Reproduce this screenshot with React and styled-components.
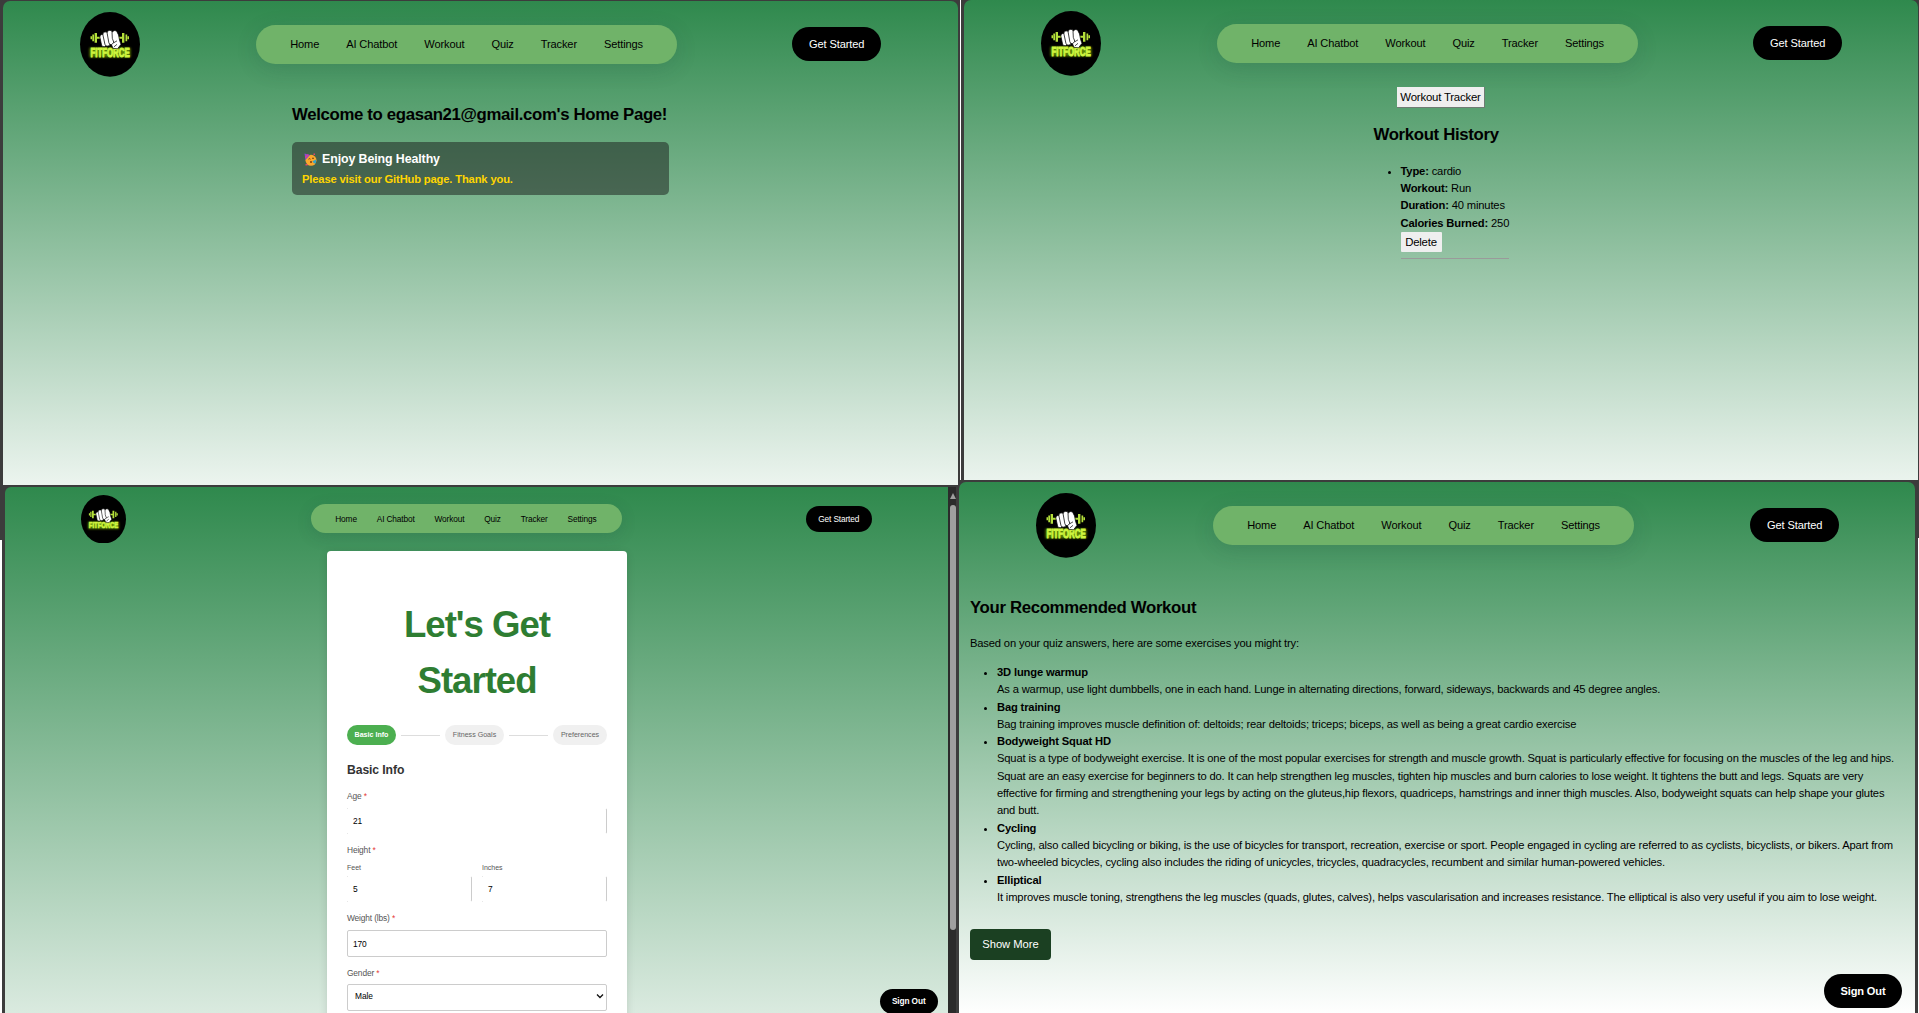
import React from "react";
import styled, { createGlobalStyle, css } from "styled-components";

const z = (n) => ({ $zoom = 2 / 3 }) => `${+(n * $zoom).toFixed(2)}px`;

const GlobalStyle = createGlobalStyle`
  *, *::before, *::after { box-sizing: border-box; }
  body {
    margin: 0;
    background: #3c3c3c;
    color: #000;
    font-family: "Liberation Sans", Arial, sans-serif;
    overflow: hidden;
  }
`;

const Desktop = styled.div`
  display: grid;
  grid-template-columns: 956px 5px 958px;
  grid-template-rows: 480px 5px 528px;
  width: 1919px;
  height: 1013px;
`;

const Frame = styled.section`
  display: flex;
  background: #3c3c3c;
  min-width: 0;
  min-height: 0;
  overflow: hidden;
`;
const HomeFrame = styled(Frame)`
  grid-area: 1 / 1 / 3 / 3;
  padding: 1px 2px 0 3px;
  border-right: 1px solid #fff;
`;
const TrackerFrame = styled(Frame)`
  grid-area: 1 / 3 / 2 / 4;
  padding: 0 1px 0 3px;
`;
const QuizFrame = styled(Frame)`
  grid-area: 3 / 1 / 4 / 2;
  padding: 2px 0 0 5px;
  background: linear-gradient(#fff, #fff) 0 55px / 2px 100% no-repeat #3c3c3c;
`;
const WorkoutFrame = styled(Frame)`
  grid-area: 2 / 2 / 4 / 4;
  padding: 2px 4px 0 3px;
  background: linear-gradient(#fff, #fff) 100% 58px / 1px 100% no-repeat #3c3c3c;
`;

const Page = styled.main`
  position: relative;
  flex: 1;
  min-width: 0;
  overflow: hidden;
  display: flex;
  flex-direction: column;
  border-radius: ${({ $radius = "7px 7px 0 0" }) => $radius};
  background: linear-gradient(#2f894d 0, #fff ${({ $fade = 533 }) => $fade}px);
`;

const Header = styled.header`
  flex: none;
  display: flex;
  align-items: center;
  justify-content: space-between;
  padding: ${z(16)} ${({ $end = 77 }) => $end}px 0 ${({ $start = 77 }) => $start}px;
  height: ${({ $zoom }) => ($zoom === 0.5 ? 55.5 : 76)}px;
`;
const LogoBox = styled.div`
  flex: none;
  width: ${z(90)};
  height: ${z(97)};
  svg { display: block; width: 100%; height: 100%; }
`;
const Nav = styled.nav`
  display: flex;
  align-items: center;
  justify-content: space-between;
  width: ${({ $zoom }) => ($zoom === 0.5 ? 311 : 421)}px;
  height: ${z(58.5)};
  padding: 0 ${z(50.5)} 0 ${({ $zoom }) => ($zoom === 0.5 ? 24.5 : 34.5)}px;
  margin-left: ${({ $zoom }) => ($zoom === 0.5 ? 1 : 0)}px;
  border-radius: ${z(30)};
  background: #70b369;
  box-shadow: 0 ${z(8)} ${z(32)} rgba(31, 60, 60, 0.16);
`;
const NavLink = styled.a`
  font-size: ${z(16.6)};
  letter-spacing: -0.12px;
  white-space: nowrap;
`;
const Pill = styled.button`
  width: ${z(133)};
  height: ${z(51)};
  padding: 0;
  border: 0;
  border-radius: ${z(30)};
  background: #000;
  color: #fff;
  font: ${({ $bold }) => ($bold ? 700 : 400)} ${z(16.6)} "Liberation Sans", Arial, sans-serif;
  letter-spacing: -0.12px;
`;
const SignOut = styled(Pill)`
  position: absolute;
  right: ${({ $right }) => $right}px;
  bottom: ${({ $bottom }) => $bottom}px;
  width: ${z(117)};
`;

const Title = styled.h2`
  margin: 0;
  font-size: 16.8px;
  letter-spacing: -0.34px;
  line-height: 26px;
  white-space: nowrap;
`;

const HomeBody = styled.div`
  display: flex;
  flex-direction: column;
  align-self: center;
  width: 377px;
  margin-top: 25px;
`;
const Notice = styled.div`
  margin-top: 14px;
  height: 53px;
  padding: 7px 10px;
  border-radius: 5px;
  background: rgba(26, 30, 28, 0.52);
  font-weight: 700;
  line-height: 20px;
  white-space: nowrap;
`;
const NoticeHead = styled.div`
  display: flex;
  align-items: center;
  gap: 5px;
  padding-left: 2px;
  color: #fff;
  font-size: 12.4px;
  letter-spacing: -0.1px;
  svg { width: 13px; height: 13px; }
`;
const NoticeText = styled.div`
  color: #ffd500;
  font-size: 11.2px;
  letter-spacing: -0.155px;
`;

const TrackerBody = styled.div`
  display: flex;
  flex-direction: column;
  align-items: center;
  margin-top: 11px;
`;
const PlainButton = styled.button`
  height: 20px;
  width: ${({ $w }) => $w}px;
  padding: 0;
  border: 0;
  border-radius: 1px;
  background: #efefef;
  color: #000;
  font: 11.4px "Liberation Sans", Arial, sans-serif;
  letter-spacing: -0.2px;
  white-space: nowrap;
  ${({ $shadow }) => $shadow && css`
    height: 21px;
    border-style: solid;
    border-width: 0 1px 1px 0;
    border-color: #6f7b73;
    border-radius: 0;
  `}
`;
const History = styled.div`
  width: 135px;
  margin-top: 14px;
`;
const HistoryList = styled.ul`
  margin: 15px 0 0;
  padding-left: 27px;
  font-size: 11.2px;
  letter-spacing: -0.16px;
  line-height: 17.2px;
  white-space: nowrap;
`;
const Rule = styled.hr`
  margin: 6px 0 0;
  border: 0;
  height: 1px;
  background: #9a9a9a;
`;

const WorkoutBody = styled.div`
  padding: 37px 11px 0;
  font-size: 11.2px;
  letter-spacing: -0.16px;
  line-height: 17.32px;
`;
const Intro = styled.p`
  margin: 14px 0 11.6px;
`;
const Exercises = styled.ul`
  margin: 0;
  padding-left: 27px;
  white-space: nowrap;
`;
const ShowMore = styled.button`
  display: block;
  margin-top: 22.4px;
  width: 81px;
  height: 31px;
  padding: 0;
  border: 0;
  border-radius: 4px;
  background: #1b4022;
  color: #fff;
  font: 11.2px "Liberation Sans", Arial, sans-serif;
`;

const Card = styled.form`
  align-self: center;
  flex: none;
  width: 300px;
  height: 500px;
  margin: 8.5px 0 0 1px;
  padding: 46px 20px 0;
  border-radius: 4px;
  background: #fff;
  box-shadow: 0 2px 8px rgba(0, 0, 0, 0.12);
`;
const CardTitle = styled.h1`
  margin: 0 auto;
  width: 200px;
  color: #2e7d32;
  font-size: 36.6px;
  letter-spacing: -1px;
  line-height: 56px;
  text-align: center;
`;
const Steps = styled.div`
  display: flex;
  align-items: center;
  gap: 5px;
  margin-top: 16px;
`;
const Step = styled.span`
  width: ${({ $w }) => $w}px;
  height: 20px;
  border-radius: 10px;
  background: ${({ $active }) => ($active ? "#4caf50" : "#f0f0f0")};
  color: ${({ $active }) => ($active ? "#fff" : "#666")};
  font-size: 7.1px;
  font-weight: ${({ $active }) => ($active ? 700 : 400)};
  line-height: 20px;
  text-align: center;
`;
const StepLine = styled.span`
  flex: 1;
  height: 1px;
  background: #ddd;
`;
const FormTitle = styled.h3`
  margin: 15px 0 0;
  color: #333;
  font-size: 12.2px;
  letter-spacing: -0.1px;
  line-height: 20px;
`;
const Label = styled.label`
  display: block;
  margin-top: ${({ $top = 10 }) => $top}px;
  color: #555;
  font-size: ${({ $small }) => ($small ? 7 : 8.4)}px;
  letter-spacing: ${({ $small }) => ($small ? 0 : -0.15)}px;
  line-height: 13px;
  i { color: #e53935; font-style: normal; }
`;
const Field = styled.div`
  display: flex;
  align-items: center;
  justify-content: space-between;
  height: 26px;
  margin-top: ${({ $top = 5 }) => $top}px;
  padding: 0 5px;
  border: 1px solid transparent;
  border-right-color: #ccc;
  border-radius: 2px;
  background:
    linear-gradient(#bbb, #bbb) 0 0 / 1px 1px no-repeat border-box,
    linear-gradient(#bbb, #bbb) 0 100% / 1px 1px no-repeat border-box;
  font-size: 8.4px;
  letter-spacing: -0.1px;
  ${({ $boxed }) => $boxed && css`
    height: 27px;
    border-color: #ccc;
    background: none;
  `}
  ${({ $select }) => $select && css`
    padding: 0 2px 3px 7px;
  `}
`;
const FieldPair = styled.div`
  display: grid;
  grid-template-columns: 1fr 1fr;
  gap: 10px;
`;

const ScrollBar = styled.div`
  width: 8px;
  display: flex;
  flex-direction: column;
  align-items: center;
  background: #2b2b2b;
  padding: 6px 0 0 2px;
  svg { display: block; flex: none; }
`;
const Thumb = styled.div`
  width: 6px;
  height: 425px;
  margin-top: 6px;
  border-radius: 3px;
  background: #9f9f9f;
`;

const Logo = () => (
  <svg viewBox="0 0 60 65" preserveAspectRatio="none">
    <defs>
      <filter id="glow" x="-20%" y="-50%" width="140%" height="200%">
        <feGaussianBlur stdDeviation="1.3" />
      </filter>
    </defs>
    <ellipse cx="30" cy="32.5" rx="30" ry="32.5" fill="#000" />
    <g fill="#b4e03a">
      <path d="M10.500 24.500h1.500v3h-1.500zM12.300 22.500h1.700v7h-1.700zM14.600 21h2.400v10h-2.400zM17 25h4v2h-4z" />
      <path d="M47.500 24.500h1.500v3h-1.500zM45.500 22.500h1.700v7h-1.700zM42 21h2.400v10H42zM38 25h4v2h-4z" />
    </g>
    <rect x="9.500" y="36" width="41" height="9.500" fill="#8fc80c" filter="url(#glow)" opacity="0.65" />
    <g transform="translate(10.400 44.800) scale(0.63 1)">
      <text fill="#cdf53f" stroke="#cdf53f" strokeWidth="1"
        fontFamily="Liberation Sans, Arial, sans-serif" fontWeight="700" fontSize="12.500">FITFORCE</text>
    </g>
    <g fill="#fff" stroke="#000" strokeWidth="0.7">
      <rect x="20.500" y="22.500" width="5" height="12.500" rx="2.300" transform="rotate(-12 23 28)" />
      <rect x="23.800" y="20" width="5.200" height="14.500" rx="2.400" transform="rotate(-12 26 27)" />
      <rect x="28" y="18.500" width="5.200" height="14.500" rx="2.400" transform="rotate(-10 30 26)" />
      <path d="M32 20.500q2-3 4.500-1.500l2 4 1.200 6 1.300 3.500-3.500 4.500-4.500-.5-1.500-3.500 2.300-2.500-1.500-4z" />
      <path d="M33.500 31l3.500-2M34 35l3-2.500" fill="none" />
    </g>
  </svg>
);

const PartyFace = () => (
  <svg viewBox="0 0 13 13">
    <circle cx="7" cy="7.300" r="5.500" fill="#fba82c" />
    <path d="M0.500 0.500l5.500 1.500-4.500 5z" fill="#8a4bd0" />
    <path d="M3.500 1.300l1.500 0.500-3.500 3.700-.4-1.700z" fill="#e0408c" />
    <path d="M4.500 6.200q1-1 2 0M8 5.500q1-1 2 0" stroke="#5b3210" fill="none" strokeWidth="0.9" />
    <path d="M8.500 8.300l3.500-1.800v3.500l-2 .5z" fill="#36a4c8" />
    <circle cx="7" cy="9" r="1" fill="#7a3b12" />
    <path d="M1.500 11h2v1.500h-2zM9.500 0.500H11V2H9.500z" fill="#e8436c" />
  </svg>
);

const links = ["Home", "AI Chatbot", "Workout", "Quiz", "Tracker", "Settings"];

const SiteHeader = ({ zoom, start, end }) => (
  <Header $zoom={zoom} $start={start} $end={end}>
    <LogoBox $zoom={zoom}><Logo /></LogoBox>
    <Nav $zoom={zoom}>
      {links.map((l) => <NavLink key={l} $zoom={zoom}>{l}</NavLink>)}
    </Nav>
    <Pill $zoom={zoom}>Get Started</Pill>
  </Header>
);

const exercises = [
  ["3D lunge warmup", ["As a warmup, use light dumbbells, one in each hand. Lunge in alternating directions, forward, sideways, backwards and 45 degree angles."]],
  ["Bag training", ["Bag training improves muscle definition of: deltoids; rear deltoids; triceps; biceps, as well as being a great cardio exercise"]],
  ["Bodyweight Squat HD", [
    "Squat is a type of bodyweight exercise. It is one of the most popular exercises for strength and muscle growth. Squat is particularly effective for focusing on the muscles of the leg and hips.",
    "Squat are an easy exercise for beginners to do. It can help strengthen leg muscles, tighten hip muscles and burn calories to lose weight. It tightens the butt and legs. Squats are very",
    "effective for firming and strengthening your legs by acting on the gluteus,hip flexors, quadriceps, hamstrings and inner thigh muscles. Also, bodyweight squats can help shape your glutes",
    "and butt.",
  ]],
  ["Cycling", [
    "Cycling, also called bicycling or biking, is the use of bicycles for transport, recreation, exercise or sport. People engaged in cycling are referred to as cyclists, bicyclists, or bikers. Apart from",
    "two-wheeled bicycles, cycling also includes the riding of unicycles, tricycles, quadracycles, recumbent and similar human-powered vehicles.",
  ]],
  ["Elliptical", ["It improves muscle toning, strengthens the leg muscles (quads, glutes, calves), helps vascularisation and increases resistance. The elliptical is also very useful if you aim to lose weight."]],
];

const session = [["Type:", "cardio"], ["Workout:", "Run"], ["Duration:", "40 minutes"], ["Calories Burned:", "250"]];

export default function App() {
  return (
    <>
      <GlobalStyle />
      <Desktop>
        <HomeFrame>
          <Page>
            <SiteHeader />
            <HomeBody>
              <Title>Welcome to egasan21@gmail.com's Home Page!</Title>
              <Notice>
                <NoticeHead><PartyFace />Enjoy Being Healthy</NoticeHead>
                <NoticeText>Please visit our GitHub page. Thank you.</NoticeText>
              </Notice>
            </HomeBody>
          </Page>
        </HomeFrame>

        <TrackerFrame>
          <Page>
            <SiteHeader end={76} />
            <TrackerBody>
              <PlainButton $w={88} $shadow>Workout Tracker</PlainButton>
              <History>
                <Title>Workout History</Title>
                <HistoryList>
                  <li>
                    {session.map(([k, v]) => <div key={k}><b>{k}</b> {v}</div>)}
                    <PlainButton $w={41}>Delete</PlainButton>
                    <Rule />
                  </li>
                </HistoryList>
              </History>
            </TrackerBody>
          </Page>
        </TrackerFrame>

        <QuizFrame>
          <Page $fade={640} $radius="6px 0 0 0">
            <SiteHeader zoom={0.5} start={76} end={76} />
            <Card>
              <CardTitle>Let's Get Started</CardTitle>
              <Steps>
                <Step $w={49} $active>Basic Info</Step>
                <StepLine />
                <Step $w={59}>Fitness Goals</Step>
                <StepLine />
                <Step $w={54}>Preferences</Step>
              </Steps>
              <FormTitle>Basic Info</FormTitle>
              <Label>Age <i>*</i></Label>
              <Field>21</Field>
              <Label>Height <i>*</i></Label>
              <FieldPair>
                <div><Label $small $top={4}>Feet</Label><Field $top={2}>5</Field></div>
                <div><Label $small $top={4}>Inches</Label><Field $top={2}>7</Field></div>
              </FieldPair>
              <Label>Weight (lbs) <i>*</i></Label>
              <Field $boxed>170</Field>
              <Label>Gender <i>*</i></Label>
              <Field $boxed $select $top={4}>
                Male
                <svg width="8" height="6" viewBox="0 0 8 6"><path d="M1 1.500l3 3 3-3" fill="none" stroke="#111" strokeWidth="1.300" /></svg>
              </Field>
            </Card>
            <SignOut $zoom={0.5} $bold $right={10} $bottom={-1}>Sign Out</SignOut>
          </Page>
          <ScrollBar>
            <svg width="6" height="6" viewBox="0 0 6 6"><path d="M3 0l3 6H0z" fill="#9f9f9f" /></svg>
            <Thumb />
          </ScrollBar>
        </QuizFrame>

        <WorkoutFrame>
          <Page>
            <SiteHeader end={76} />
            <WorkoutBody>
              <Title>Your Recommended Workout</Title>
              <Intro>Based on your quiz answers, here are some exercises you might try:</Intro>
              <Exercises>
                {exercises.map(([name, lines]) => (
                  <li key={name}>
                    <b>{name}</b>
                    {lines.map((t) => <div key={t}>{t}</div>)}
                  </li>
                ))}
              </Exercises>
              <ShowMore>Show More</ShowMore>
            </WorkoutBody>
            <SignOut $bold $right={13} $bottom={5}>Sign Out</SignOut>
          </Page>
        </WorkoutFrame>
      </Desktop>
    </>
  );
}
